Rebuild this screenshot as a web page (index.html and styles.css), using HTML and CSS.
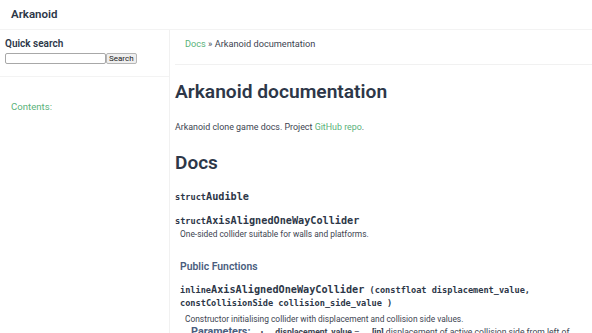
FILE: index.html
```html
<!DOCTYPE html>
<html>
<head>
<meta charset="utf-8">
<link rel="stylesheet" href="styles.css">
</head>
<body>
<header class="topbar"><span class="brand">Arkanoid</span></header>
<div class="layout">
  <aside class="sidebar">
    <div class="search">
      <h3 class="search-title">Quick search</h3>
      <form class="search-form"><input class="search-input" type="text"><button class="search-btn" type="button">Search</button></form>
    </div>
    <div class="contents"><p class="contents-title">Contents:</p></div>
  </aside>
  <main class="main">
    <nav class="crumbs"><a class="link">Docs</a> » Arkanoid documentation</nav>
    <h1 class="h1">Arkanoid documentation</h1>
    <p class="para">Arkanoid clone game docs. Project <a class="link">GitHub repo</a>.</p>
    <h2 class="h2">Docs</h2>
    <div class="sig sig-first"><span class="kw">struct</span><span class="name">Audible</span></div>
    <div class="sig sig-next"><span class="kw">struct</span><span class="name">AxisAlignedOneWayCollider</span></div>
    <div class="struct-body">
      <p class="desc">One-sided collider suitable for walls and platforms.</p>
      <h3 class="h3">Public Functions</h3>
      <div class="fsig"><span class="kw">inline</span><span class="name">AxisAlignedOneWayCollider</span> <span class="kw">(const</span><span class="kw">float</span> <span class="kw">displacement_value</span>, <span class="kw">const</span><span class="kw">CollisionSide</span> <span class="kw">collision_side_value</span> <span class="kw">)</span></div>
      <div class="fbody">
        <p class="desc desc-fn">Constructor initialising collider with displacement and collision side values.</p>
        <div class="params"><span class="ptitle">Parameters:</span><span class="bullet">•</span><b class="pname">displacement_value</b> – <b class="pin">[in]</b> displacement of active collision side from left of</div>
      </div>
    </div>
  </main>
</div>
</body>
</html>
```
FILE: styles.css
```css
* { box-sizing: border-box; }
html, body { margin: 0; padding: 0; background: #fff; }
body { font-family: Roboto, "Liberation Sans", Arial, sans-serif; color: #2d3748; width: 592px; height: 333px; overflow: hidden; }
.topbar { height: 30px; border-bottom: 1px solid #f3f3f3; padding: 0 11px 1px; display: flex; align-items: center; }
.brand { font-size: 11.5px; font-weight: 600; color: #2d3748; }
.layout { display: grid; grid-template-columns: 170px 1fr; }
.sidebar { border-right: 1px solid #f1f1f1; min-height: 303px; }
.search { padding: 8px 5px 12px; border-bottom: 1px solid #f3f3f3; }
.search-title { margin: 0 0 3px; font-size: 10px; line-height: 12px; font-weight: 600; color: #2d3748; }
.search-form { display: flex; }
.search-input { width: 101px; height: 11px; border: 1px solid #a8a8a8; border-radius: 2px; padding: 0; margin: 0; background: #fff; }
.search-btn { height: 11px; padding: 0 2px; margin: 0; font-family: Roboto, "Liberation Sans", Arial, sans-serif; font-size: 8px; line-height: 9px; border: 1px solid #b5b5b5; border-radius: 2px; background: #efefef; color: #222; }
.contents { padding: 24px 11px 0; }
.contents-title { margin: 0; font-size: 9.6px; line-height: 12px; color: #5ab27a; }
.main { padding: 0 0 0 5px; }
.crumbs { font-size: 9.2px; color: #3d4451; padding: 8px 0 14px 10px; border-bottom: 1px solid #f1f1f1; line-height: 12px; }
.link { color: #5ab27a; text-decoration: none; }
.h1 { margin: 15px 0 0; font-size: 19.2px; line-height: 24px; font-weight: 600; color: #2d3748; }
.para { margin: 17px 0 0; font-size: 8.9px; line-height: 12px; color: #3d4451; }
.h2 { margin: 19px 0 0; font-size: 19px; line-height: 22px; font-weight: 600; color: #2d3748; }
.sig { font-family: "DejaVu Sans Mono", monospace; font-weight: 700; color: #2d3748; line-height: 14px; }
.sig-first { margin-top: 14px; }
.sig-next { margin-top: 8px; }
.kw { font-size: 8.6px; font-family: "DejaVu Sans Mono", monospace; font-weight: 700; }
.name { font-size: 10.2px; }
.struct-body { padding-left: 5px; }
.desc { margin: 0; font-size: 8.4px; line-height: 12px; color: #3d4451; }
.h3 { margin: 20px 0 0; font-size: 10.4px; line-height: 14px; font-weight: 600; color: #4a5d7e; }
.fsig { margin-top: 9px; width: 355px; font-family: "DejaVu Sans Mono", monospace; font-weight: 700; color: #2d3748; line-height: 13px; font-size: 8.6px; }
.fsig .name { font-size: 10.2px; }
.fbody { padding-left: 5px; }
.desc-fn { margin-top: 3px; }
.params { margin-top: 1px; font-size: 8.6px; line-height: 12px; color: #3d4451; padding-left: 6px; }
.ptitle { font-weight: 700; color: #4a5d7e; font-size: 10.8px; }
.bullet { margin: 0 12px 0 10px; }
.pname, .pin { font-weight: 700; }
.pin { margin-left: 10px; }
```
